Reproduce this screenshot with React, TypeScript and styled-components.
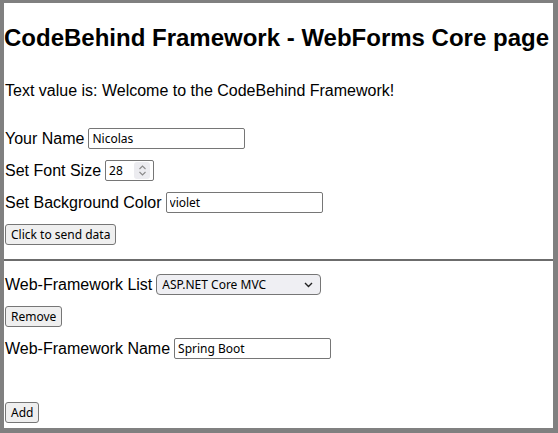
import React from 'react';
import styled, { createGlobalStyle } from 'styled-components';

const GlobalStyle = createGlobalStyle`
  html, body {
    margin: 0;
    padding: 0;
    background: #ffffff;
  }
  * {
    box-sizing: border-box;
  }
`;

const Frame = styled.div`
  width: 558px;
  height: 433px;
  border-style: solid;
  border-color: #808080;
  border-width: 3px 5px 5px 4px;
  background: #ffffff;
  font-family: 'Liberation Sans', Arial, sans-serif;
  color: #000000;
  overflow: hidden;
`;

const Section = styled.div`
  display: flex;
  flex-direction: column;
  align-items: flex-start;
  gap: 11px;
  padding-left: 1px;
`;

const Title = styled.h1`
  margin: 21px 0 0 0;
  font-size: 24px;
  line-height: 28px;
  font-weight: 700;
  white-space: nowrap;
`;

const Message = styled.p`
  margin: 30px 0 28px 0;
  padding-left: 1px;
  font-size: 16px;
  line-height: 18px;
`;

const Row = styled.div<{ $gap?: number }>`
  display: flex;
  align-items: center;
  height: 21px;
  gap: ${(p) => p.$gap ?? 4}px;
`;

const Label = styled.label`
  font-size: 16px;
  line-height: 18px;
  white-space: nowrap;
`;

const controlFont = `
  font-family: 'Noto Sans', 'Open Sans', sans-serif;
  font-size: 12px;
  color: #000000;
`;

const TextInput = styled.input<{ $width?: number }>`
  ${controlFont}
  width: ${(p) => p.$width ?? 157}px;
  height: 21px;
  padding: 0 3px;
  border: 1px solid #767676;
  border-radius: 2px;
  background: #ffffff;
  outline: none;
`;

const NumberBox = styled.div`
  position: relative;
  display: flex;
  align-items: center;
  width: 49px;
  height: 21px;
  border: 1px solid #767676;
  border-radius: 2px;
  background: #ffffff;
`;

const NumberField = styled.input`
  ${controlFont}
  width: 26px;
  height: 19px;
  padding: 0 3px;
  border: none;
  outline: none;
  background: transparent;
`;

const Spinner = styled.span`
  position: absolute;
  right: 3px;
  top: 1px;
  width: 16px;
  height: 17px;
  border-radius: 3px;
  background: #ececf0;
  display: flex;
  align-items: center;
  justify-content: center;
`;

const SelectBox = styled.div`
  position: relative;
  width: 165px;
  height: 21px;
`;

const Select = styled.select`
  ${controlFont}
  appearance: none;
  width: 165px;
  height: 21px;
  padding: 0 20px 0 5px;
  border: 1px solid #767676;
  border-radius: 4px;
  background: #efeff3;
  outline: none;
`;

const Chevron = styled.svg`
  position: absolute;
  right: 8px;
  top: 8px;
  pointer-events: none;
`;

const Button = styled.button`
  ${controlFont}
  height: 21px;
  padding: 0 5px;
  border: 1px solid #767676;
  border-radius: 3px;
  background: #efefef;
  line-height: 19px;
  cursor: default;
`;

const Rule = styled.hr`
  margin: 14px 0 13px 0;
  border: none;
  border-top: 2px solid #6c6c6c;
  height: 0;
`;

const Spacer = styled.div`
  height: 21px;
`;

const App: React.FC = () => {
  return (
    <>
      <GlobalStyle />
      <Frame>
        <Title>CodeBehind Framework - WebForms Core page</Title>
        <Message>Text value is: Welcome to the CodeBehind Framework!</Message>

        <Section>
          <Row>
            <Label htmlFor="name">Your Name</Label>
            <TextInput id="name" defaultValue="Nicolas" />
          </Row>
          <Row>
            <Label htmlFor="size">Set Font Size</Label>
            <NumberBox>
              <NumberField id="size" defaultValue="28" />
              <Spinner>
                <svg width="9" height="13" viewBox="0 0 9 13" fill="none" stroke="#8a8a8a" strokeWidth="1.1">
                  <path d="M1.5 5 L4.5 2 L7.5 5" />
                  <path d="M1.5 8 L4.5 11 L7.5 8" />
                </svg>
              </Spinner>
            </NumberBox>
          </Row>
          <Row>
            <Label htmlFor="bg">Set Background Color</Label>
            <TextInput id="bg" defaultValue="violet" />
          </Row>
          <Button>Click to send data</Button>
        </Section>

        <Rule />

        <Section>
          <Row>
            <Label htmlFor="list">Web-Framework List</Label>
            <SelectBox>
              <Select id="list" defaultValue="aspnet">
                <option value="aspnet">ASP.NET Core MVC</option>
                <option value="spring">Spring Boot</option>
                <option value="django">Django</option>
              </Select>
              <Chevron width="9" height="6" viewBox="0 0 9 6" fill="none" stroke="#222" strokeWidth="1.4">
                <path d="M1 1 L4.5 4.5 L8 1" />
              </Chevron>
            </SelectBox>
          </Row>
          <Button>Remove</Button>
          <Row>
            <Label htmlFor="fw">Web-Framework Name</Label>
            <TextInput id="fw" defaultValue="Spring Boot" />
          </Row>
          <Spacer />
          <Button>Add</Button>
        </Section>
      </Frame>
    </>
  );
};

export default App;
